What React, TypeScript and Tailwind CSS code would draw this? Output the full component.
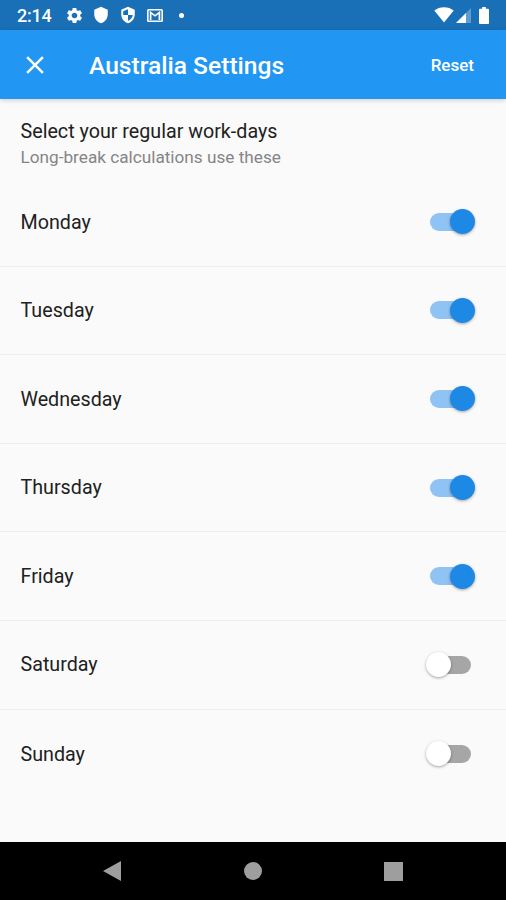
import React, { useState } from 'react';
import { MdClose, MdSettings, MdShield } from 'react-icons/md';

interface WorkDay {
  name: string;
  enabled: boolean;
}

const initialDays: WorkDay[] = [
  { name: 'Monday', enabled: true },
  { name: 'Tuesday', enabled: true },
  { name: 'Wednesday', enabled: true },
  { name: 'Thursday', enabled: true },
  { name: 'Friday', enabled: true },
  { name: 'Saturday', enabled: false },
  { name: 'Sunday', enabled: false },
];

const StatusBar: React.FC = () => (
  <div className="h-[30px] shrink-0 bg-[#1a70b7] text-white flex items-center justify-between pl-[17px] pr-[17px]">
    <div className="flex items-center">
      <span className="w-[47.5px] text-[18px] leading-[30px] tracking-[-0.2px] font-medium pt-px">2:14</span>
      <MdSettings className="size-[19px]" />
      <MdShield className="size-[18px] ml-2" />
      <svg className="size-[18px] ml-[9.5px]" viewBox="0 0 24 24">
        <path d="M12 1 3 5v6c0 5.55 3.84 10.74 9 12 5.16-1.26 9-6.45 9-12V5z" fill="currentColor" />
        <path d="M12 4.3v7.7H5.6V7.1zM12 12h6.4c-.6 3.5-3 6.6-6.4 7.8z" fill="#1a70b7" />
      </svg>
      <svg className="w-4 h-[13px] ml-[10px]" viewBox="0 0 16 13" fill="none" stroke="currentColor">
        <rect x="0.8" y="0.8" width="14.4" height="11.4" rx="0.8" strokeWidth="1.6" />
        <path d="M3.6 11V3.4L8 6.8l4.4-3.4V11" strokeWidth="1.7" />
      </svg>
      <span className="size-[5px] rounded-full bg-white ml-4" />
    </div>
    <div className="flex items-center">
      <svg className="w-5 h-4" viewBox="0 0 20 16" fill="currentColor">
        <path d="M10 15.5 0.3 3.6C3 1.5 6.3 0.3 10 0.3s7 1.2 9.7 3.3z" />
      </svg>
      <svg className="w-[15px] h-4 ml-0.5" viewBox="0 0 15 16" fill="currentColor">
        <path d="M0 16 15 1v15z" opacity="0.3" />
        <path d="M0 16 10 6V16z" />
      </svg>
      <svg className="w-[10px] h-[17px] ml-2" viewBox="0 0 11 17" preserveAspectRatio="none" fill="currentColor">
        <path d="M3.5 0h4v1.8H10c.6 0 1 .4 1 1V16c0 .6-.4 1-1 1H1c-.6 0-1-.4-1-1V2.8c0-.6.4-1 1-1h2.5z" />
      </svg>
    </div>
  </div>
);

interface ToggleProps {
  label: string;
  checked: boolean;
  onChange: () => void;
}

const Toggle: React.FC<ToggleProps> = ({ label, checked, onChange }) => (
  <button
    type="button"
    role="switch"
    aria-label={label}
    aria-checked={checked}
    onClick={onChange}
    className="flex items-center w-12 h-[25px]"
  >
    <span
      className={`flex items-center w-[41px] h-[18px] mx-auto rounded-full ${
        checked ? 'bg-[#8ec3f3] justify-end' : 'bg-[#a6a6a6] justify-start'
      }`}
    >
      <span
        className={`size-[25px] shrink-0 rounded-full shadow-[0_1px_3px_rgba(0,0,0,0.35)] ${
          checked ? 'bg-[#1e88e5] -mr-1' : 'bg-white -ml-1'
        }`}
      />
    </span>
  </button>
);

export default function App() {
  const [days, setDays] = useState(initialDays);

  const toggleDay = (index: number) => {
    setDays(days.map((day, i) => (i === index ? { ...day, enabled: !day.enabled } : day)));
  };

  return (
    <div className="w-full h-screen flex flex-col overflow-hidden bg-[#fafafa] font-[Roboto,sans-serif]">
      <StatusBar />

      <header className="relative h-[69px] shrink-0 bg-[#2196f3] text-white flex items-center pl-5 pr-8 shadow-[0_1px_5px_rgba(0,0,0,0.2)]">
        <MdClose className="size-[30px]" />
        <h1 className="ml-[39px] flex-1 pt-[3px] text-[24.6px] font-medium whitespace-nowrap">Australia Settings</h1>
        <button type="button" className="pt-0.5 text-[17px] font-medium" onClick={() => setDays(initialDays)}>
          Reset
        </button>
      </header>

      <main className="flex-1 min-h-0">
        <div className="h-[79px] pl-[20.5px] pt-5">
          <p className="text-[19.7px] leading-[26px] text-[#212121]">Select your regular work-days</p>
          <p className="text-[17.2px] leading-[24px] text-[#858585]">Long-break calculations use these</p>
        </div>
        {days.map((day, index) => (
          <div
            key={day.name}
            className="h-[88.6px] flex items-center justify-between pl-[20.5px] pr-[31.5px] border-b border-[#eeeeee] last:border-b-0"
          >
            <span className="pt-px text-[19.7px] text-[#212121]">{day.name}</span>
            <Toggle label={day.name} checked={day.enabled} onChange={() => toggleDay(index)} />
          </div>
        ))}
      </main>

      <nav className="h-[58px] shrink-0 bg-black flex items-center justify-between px-[102px] text-[#9e9e9e]">
        <svg className="size-5" viewBox="0 0 20 20" fill="currentColor">
          <path d="M1 10 19 0v20z" />
        </svg>
        <span className="size-[18px] rounded-full bg-[#9e9e9e]" />
        <span className="size-[19px] mr-px bg-[#9e9e9e]" />
      </nav>
    </div>
  );
}
